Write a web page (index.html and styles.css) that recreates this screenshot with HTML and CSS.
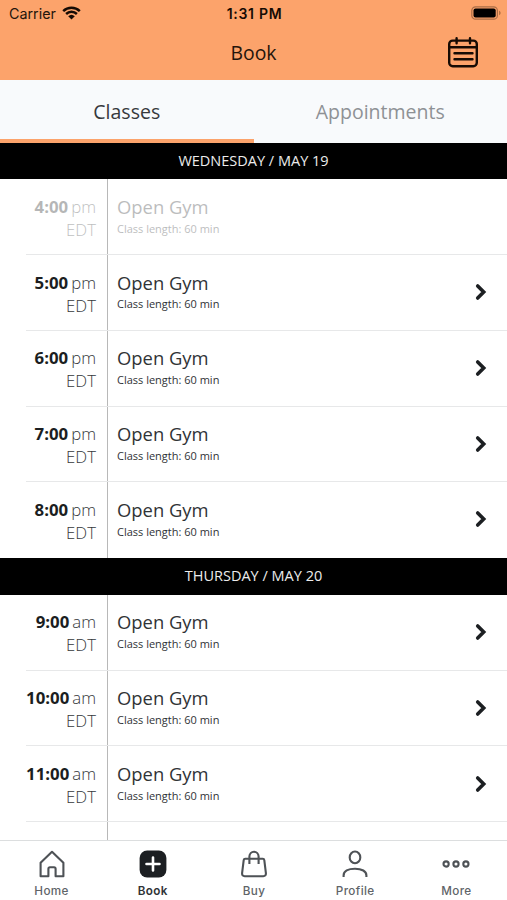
FILE: index.html
```html
<!DOCTYPE html>
<html lang="en">
<head>
<meta charset="utf-8">
<title>Book</title>
<link rel="stylesheet" href="styles.css">
</head>
<body>
<div class="app">
  <header class="top">
    <div class="status">
      <div class="carrier"><span class="carrier-name">Carrier</span>
        <svg width="19" height="14" viewBox="0 0 19 14"><path d="M1.2 5.1a12 12 0 0 1 16.6 0M4.1 8a7.8 7.8 0 0 1 10.8 0" fill="none" stroke="#160b04" stroke-width="2.5"/><path d="M6.2 10.2a4.8 4.8 0 0 1 6.6 0L9.5 13.6z" fill="#160b04"/></svg>
      </div>
      <span class="clock">1:31 PM</span>
      <svg class="battery" width="30" height="14" viewBox="0 0 30 14"><rect x=".8" y=".8" width="25.6" height="12.4" rx="3.8" fill="none" stroke="#a96d46" stroke-width="1.2"/><rect x="2.5" y="2.5" width="22.2" height="9" rx="2" fill="#000"/><path d="M28 4.8c2.2.7 2.2 3.7 0 4.4z" fill="#b57447"/></svg>
    </div>
    <div class="titlebar">
      <span></span>
      <h1>Book</h1>
      <svg class="calendar" width="30" height="31" viewBox="0 0 30 31" fill="none" stroke="#160b04" stroke-width="2.4" stroke-linecap="round"><rect x="1.2" y="3.6" width="27.6" height="25.6" rx="3.5"/><path d="M1.5 10.3h27M8.6 1.2v5M22 1.2v5M6.5 16.2h18M6.5 22.3h18"/></svg>
    </div>
  </header>
  <nav class="tabs"><a class="tab active">Classes</a><a class="tab">Appointments</a></nav>
  <main class="schedule">
    <h2 class="day">WEDNESDAY / MAY 19</h2>
    <section class="list">
      <article class="row past"><div class="time"><p><b>4:00</b>pm</p><p>EDT</p></div><div class="info"><h3>Open Gym</h3><p>Class length: 60 min</p></div></article>
      <article class="row"><div class="time"><p><b>5:00</b>pm</p><p>EDT</p></div><div class="info"><h3>Open Gym</h3><p>Class length: 60 min</p></div><svg class="chev" viewBox="0 0 12 18"><path d="M2.7 3 8.7 9l-6 6"/></svg></article>
      <article class="row"><div class="time"><p><b>6:00</b>pm</p><p>EDT</p></div><div class="info"><h3>Open Gym</h3><p>Class length: 60 min</p></div><svg class="chev" viewBox="0 0 12 18"><path d="M2.7 3 8.7 9l-6 6"/></svg></article>
      <article class="row"><div class="time"><p><b>7:00</b>pm</p><p>EDT</p></div><div class="info"><h3>Open Gym</h3><p>Class length: 60 min</p></div><svg class="chev" viewBox="0 0 12 18"><path d="M2.7 3 8.7 9l-6 6"/></svg></article>
      <article class="row"><div class="time"><p><b>8:00</b>pm</p><p>EDT</p></div><div class="info"><h3>Open Gym</h3><p>Class length: 60 min</p></div><svg class="chev" viewBox="0 0 12 18"><path d="M2.7 3 8.7 9l-6 6"/></svg></article>
    </section>
    <h2 class="day">THURSDAY / MAY 20</h2>
    <section class="list">
      <article class="row"><div class="time"><p><b>9:00</b>am</p><p>EDT</p></div><div class="info"><h3>Open Gym</h3><p>Class length: 60 min</p></div><svg class="chev" viewBox="0 0 12 18"><path d="M2.7 3 8.7 9l-6 6"/></svg></article>
      <article class="row"><div class="time"><p><b>10:00</b>am</p><p>EDT</p></div><div class="info"><h3>Open Gym</h3><p>Class length: 60 min</p></div><svg class="chev" viewBox="0 0 12 18"><path d="M2.7 3 8.7 9l-6 6"/></svg></article>
      <article class="row"><div class="time"><p><b>11:00</b>am</p><p>EDT</p></div><div class="info"><h3>Open Gym</h3><p>Class length: 60 min</p></div><svg class="chev" viewBox="0 0 12 18"><path d="M2.7 3 8.7 9l-6 6"/></svg></article>
      <div class="row"><div class="time"></div></div>
    </section>
  </main>
  <nav class="bottom">
    <a class="item"><svg width="28" height="28" viewBox="0 0 28 28"><path d="M2.6 26.2V12.8L14 1.8l11.4 11v13.4h-7.8v-7.4q0-1.6-1.6-1.6h-4q-1.6 0-1.6 1.6v7.4z"/></svg><span>Home</span></a>
    <a class="item on"><svg width="28" height="28" viewBox="0 0 28 28"><rect x=".6" y=".6" width="26.8" height="26.8" rx="7.5" fill="#1c1f22" stroke="none"/><path d="M14 7.5v13M7.5 14h13" stroke="#fff" stroke-width="2.6" stroke-linecap="round"/></svg><span>Book</span></a>
    <a class="item"><svg width="28" height="28" viewBox="0 0 28 28"><path d="M5.2 8.8h17.6q1.3 0 1.5 1.3l1.6 13q.2 3.1-2.6 3.1H4.7q-2.8 0-2.6-3.1l1.6-13q.2-1.3 1.5-1.3zM9.4 14V6.6a4.6 4.9 0 0 1 9.2 0V14"/></svg><span>Buy</span></a>
    <a class="item"><svg width="28" height="28" viewBox="0 0 28 28"><ellipse cx="14" cy="7.4" rx="5.3" ry="5.9"/><path d="M2.6 27v-1.5c0-4.2 4.5-6.8 11.4-6.8s11.4 2.6 11.4 6.8V27"/></svg><span>Profile</span></a>
    <a class="item"><svg width="28" height="28" viewBox="0 0 28 28"><circle cx="4.1" cy="14" r="2.6"/><circle cx="14" cy="14" r="2.6"/><circle cx="23.9" cy="14" r="2.6"/></svg><span>More</span></a>
  </nav>
</div>
</body>
</html>
```
FILE: styles.css
```css
* { box-sizing: border-box; margin: 0; padding: 0; }
body { background: #fff; color: #303336; font-family: "Open Sans", sans-serif; overflow: hidden; }
.app { width: 507px; height: 900px; display: flex; flex-direction: column; overflow: hidden; }
.top { height: 79.5px; background: #fca36b; color: #24150b; flex: none; }
.status { height: 28px; padding: 0 7px 0 9px; display: grid; grid-template-columns: 1fr auto 1fr; align-items: center; font: 14.3px/28px Inter, sans-serif; }
.carrier { display: flex; align-items: center; gap: 6px; }
.carrier svg { margin-top: -3px; }
.clock { font-weight: 600; font-size: 14px; letter-spacing: .7px; color: #160b04; }
.battery { justify-self: end; margin-right: -1px; margin-top: -2px; }
.titlebar { height: 50px; padding: 0 29px; display: grid; grid-template-columns: 1fr auto 1fr; align-items: center; }
.titlebar h1 { font-size: 19.4px; font-weight: 400; line-height: 50px; }
.calendar { justify-self: end; margin-top: -2px; }
.tabs { height: 63px; flex: none; display: grid; grid-template-columns: 1fr 1fr; background: #f8fafc; }
.tab { text-align: center; font-size: 19.5px; line-height: 63px; color: #8e9195; }
.tab.active { color: #36393c; box-shadow: inset 0 -4px #fca36b; }
.schedule { flex: 1; min-height: 0; overflow: hidden; }
.day { height: 36.8px; background: #000; color: #ececec; text-align: center; font-size: 14.5px; font-weight: 400; line-height: 36px; }
.row { height: 75.75px; display: flex; position: relative; }
.row:not(:last-child)::after { content: ""; position: absolute; left: 26px; right: 0; bottom: 0; height: 1px; background: #e7e8e9; }
.time { width: 107.5px; flex: none; padding: 15.6px 10.5px 0 0; border-right: 1px solid #b8b8b8; text-align: right; font-size: 16.8px; line-height: 23px; font-weight: 300; color: #34373a; white-space: nowrap; }
.time b { font-weight: 700; color: #1b1e21; margin-right: 3px; }
.info { flex: 1; padding: 14.6px 0 0 9.5px; }
.info h3 { font-weight: 400; font-size: 18.4px; line-height: 25px; margin-bottom: .7px; }
.info p { font-size: 11px; line-height: 18px; }
.past .time p, .past .info { opacity: .32; }
.chev { width: 12px; height: 18px; margin: 28.2px 20px 0 0; fill: none; stroke: #1c1f22; stroke-width: 3.6; stroke-linecap: round; stroke-linejoin: miter; }
.bottom { height: 60px; padding-left: 1px; flex: none; display: grid; grid-template-columns: repeat(5, 1fr); border-top: 1px solid #dcdedf; background: #fff; }
.item { display: flex; flex-direction: column; align-items: center; padding-top: 8.5px; color: #606468; font: 500 11.7px/18px Inter, sans-serif; letter-spacing: .4px; }
.item svg { fill: none; stroke: #4e5256; stroke-width: 2.1; stroke-linejoin: round; }
.item span { margin-top: 4.5px; }
.item.on { color: #303336; font-weight: 600; }
```
